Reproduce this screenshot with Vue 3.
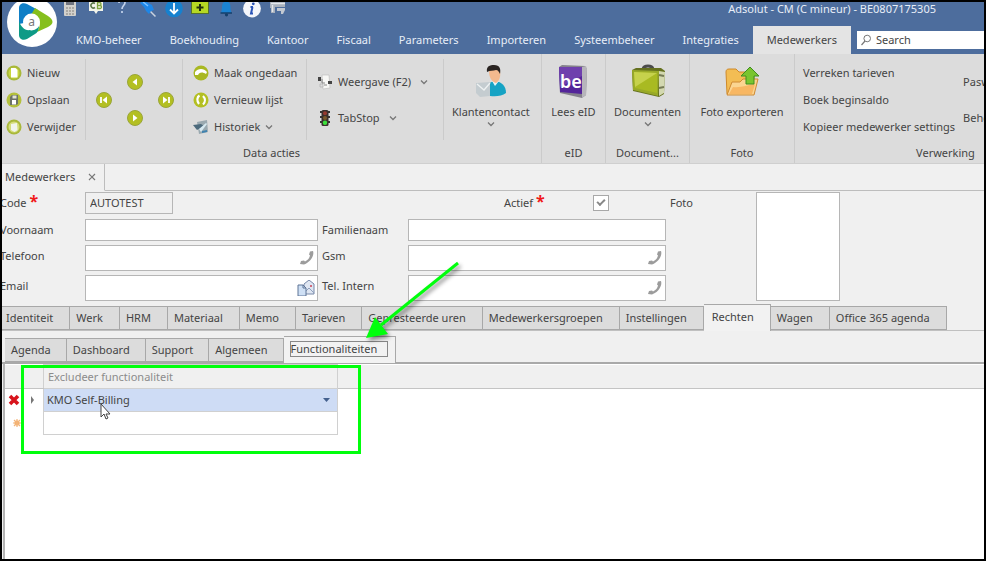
<script setup>
import { ref } from 'vue'

const menu = ['KMO-beheer', 'Boekhouding', 'Kantoor', 'Fiscaal', 'Parameters', 'Importeren', 'Systeembeheer', 'Integraties', 'Medewerkers']
const activeMenu = ref('Medewerkers')

const tabs = ['Identiteit', 'Werk', 'HRM', 'Materiaal', 'Memo', 'Tarieven', 'Gepresteerde uren', 'Medewerkersgroepen', 'Instellingen', 'Rechten', 'Wagen', 'Office 365 agenda']
const activeTab = ref('Rechten')

const subTabs = ['Agenda', 'Dashboard', 'Support', 'Algemeen', 'Functionaliteiten']
const activeSubTab = ref('Functionaliteiten')

const code = ref('AUTOTEST')
const active = ref(true)
const functionality = ref('KMO Self-Billing')
</script>

<template>
  <div class="window">
    <header class="header">
      <div class="topbar">
        <div class="quick">
          <button aria-label="Rekenmachine">
            <svg viewBox="0 0 18 16"><rect x="3" y="-3" width="12" height="17" rx="1" fill="#d3d1cc" /><rect x="5" y="-1" width="8" height="4" fill="#6f7480" /><path d="M5 6h2M8 6h2M11 6h2M5 9h2M8 9h2M11 9h2M5 12h2M8 12h2M11 12h2" stroke="#a09c96" stroke-width="1.6" /></svg>
          </button>
          <button aria-label="CodaBox">
            <svg viewBox="0 0 18 16"><path d="M2-3h14v12h-5l-2 3-2-3H2z" fill="#f2f4ea" /><path d="M8 1.500a2.500 2.500 0 1 0 0 4" fill="none" stroke="#5d7a4c" stroke-width="1.600" /><path d="M10.500 .5h2a1.500 1.500 0 0 1 0 3h-2zm0 3h2.500a1.500 1.500 0 0 1 0 3h-2.500z" fill="none" stroke="#7da33f" stroke-width="1.300" /></svg>
          </button>
          <button aria-label="Help">
            <svg viewBox="0 0 18 16"><path d="M6 1C6-3 12-3 12 .5 12 3.500 9 3.500 9 7M9 9v2" fill="none" stroke="#c3d3ec" stroke-width="1.700" /></svg>
          </button>
          <button aria-label="Vastmaken">
            <svg viewBox="0 0 18 16"><path d="M11 9l5.500 5.500" stroke="#c9d3e0" stroke-width="1.500" /><path d="M1 1l4-3 4 3 4 2 2 5-3 1-2 3-3-3-2-4z" fill="#1e86e6" /><path d="M4 0l5 4" stroke="#7dc0ff" stroke-width="1.500" /></svg>
          </button>
          <button aria-label="Downloaden">
            <svg viewBox="0 0 18 16"><circle cx="9" cy="6.500" r="8.800" fill="#1681cf" /><path d="M9 1v10M5 7.500l4 4 4-4" fill="none" stroke="#fff" stroke-width="1.800" /></svg>
          </button>
          <button aria-label="Toevoegen">
            <svg viewBox="0 0 18 16"><rect x="0" y="-2" width="18" height="14" fill="#55702a" /><rect x="1" y="-1" width="16" height="12" fill="#b5d823" /><path d="M9 2v7M5.500 5.500h7" stroke="#20300c" stroke-width="2" /></svg>
          </button>
          <button aria-label="Meldingen">
            <svg viewBox="0 0 18 16"><path d="M3.500 11c2-2 1-6 2-9C6.500-1 12-1 13 2c1 3 0 7 2 9z" fill="#1b83d2" /><path d="M3.500 11h11.500" stroke="#123c66" stroke-width="1.400" /><circle cx="9.500" cy="12.800" r="1.600" fill="#143f6b" /></svg>
          </button>
          <button aria-label="Informatie">
            <svg viewBox="0 0 18 16"><circle cx="9" cy="6.500" r="8.900" fill="#f4f6fb" /><path d="M9.500 5l-1.500 6.500h2M7.500 5h2.500" fill="none" stroke="#2b55b8" stroke-width="2" /><circle cx="10.300" cy="1.800" r="1.400" fill="#2b55b8" /></svg>
          </button>
          <button aria-label="Lay-out">
            <svg viewBox="0 0 18 16"><path d="M1-1h15v6H6v6H2V6H1z" fill="#a9b1bd" /><path d="M2 1.500h14M3.500 3v7" stroke="#e3e7ec" stroke-width="1.500" /><path d="M8 6h8v2l-2 4h-2V9H8z" fill="#c2c8d1" /></svg>
          </button>
        </div>
        <h1 class="title">Adsolut - CM (C mineur) - BE0807175305</h1>
      </div>
      <nav class="menu">
        <button v-for="m in menu" :key="m" :class="{ on: m === activeMenu }" @click="activeMenu = m">{{ m }}</button>
        <label class="search">
          <svg viewBox="0 0 12 12"><circle cx="7.200" cy="4.500" r="3.300" fill="none" stroke="#777" /><path d="M5 7l-3.500 4" stroke="#777" stroke-width="1.200" /></svg>
          <input type="search" placeholder="Search" aria-label="Search" />
        </label>
      </nav>
      <button class="logo" aria-label="Adsolut">
        <svg viewBox="0 0 50 50">
          <circle cx="25" cy="25" r="25" fill="#fff" />
          <path d="M12 27V11c0-4 4-6 8-4l11 6-6 6c-5 0-8 4-8 7z" fill="#0f7fc6" />
          <path d="M28 11l13 8c6 4 6 8 0 11l-11 5c3-5 4-9 1-13-1-3-4-4-7-4z" fill="#86bf1d" />
          <path d="M12 24c2 6 6 10 11 9 4 0 7-2 9-4 0 4-2 7-4 8l-8 5c-4 2-8 0-8-4z" fill="#0d9a86" />
          <circle cx="24.500" cy="25" r="8.500" fill="#fff" />
          <text x="24.500" y="29" text-anchor="middle" font-size="12" fill="#777">a</text>
        </svg>
      </button>
    </header>

    <section class="ribbon" aria-label="Lint">
      <div class="group data">
        <div class="body">
          <div class="col file">
            <button>
              <svg viewBox="0 0 16 16"><circle cx="8" cy="8" r="7.500" fill="#a9b83a" /><circle cx="8" cy="8" r="5.500" fill="#c9d63e" /><path d="M5 3h4.500l2 2v7.500H5z" fill="#fff" /></svg>
              Nieuw
            </button>
            <button>
              <svg viewBox="0 0 16 16"><circle cx="8" cy="8" r="7.500" fill="#b4c03c" /><path d="M4 5l2-2h6v9l-2 1H4z" fill="#6c7268" /><path d="M6.500 3.500h4v3h-4z" fill="#e3e5d6" /><path d="M6 8h4v4.500H6z" fill="#fff" /></svg>
              Opslaan
            </button>
            <button>
              <svg viewBox="0 0 16 16"><circle cx="8" cy="8" r="7.500" fill="#a9b83a" /><circle cx="8" cy="8" r="5.500" fill="#d5dd7c" /><path d="M5 5l6-1 .5 7-3 2-3.500-2z" fill="#f1f5ec" /></svg>
              Verwijder
            </button>
          </div>
          <div class="col nav">
            <button aria-label="Eerste"><svg viewBox="0 0 16 16"><circle cx="8" cy="8" r="7.500" fill="#b3bf22" stroke="#9aa53a" /><path d="M5 5v6" stroke="#fff" stroke-width="1.800" /><path d="M11 4.500v7L6.500 8z" fill="#fff" /></svg></button>
            <div class="mid">
              <button aria-label="Vorige"><svg viewBox="0 0 16 16"><circle cx="8" cy="8" r="7.500" fill="#b3bf22" stroke="#9aa53a" /><path d="M10 4.500v7L5.500 8z" fill="#fff" /></svg></button>
              <button aria-label="Volgende"><svg viewBox="0 0 16 16"><circle cx="8" cy="8" r="7.500" fill="#b3bf22" stroke="#9aa53a" /><path d="M6 4.500v7L10.500 8z" fill="#fff" /></svg></button>
            </div>
            <button aria-label="Laatste"><svg viewBox="0 0 16 16"><circle cx="8" cy="8" r="7.500" fill="#b3bf22" stroke="#9aa53a" /><path d="M11 5v6" stroke="#fff" stroke-width="1.800" /><path d="M5 4.500v7L9.500 8z" fill="#fff" /></svg></button>
          </div>
          <div class="col history">
            <button>
              <svg viewBox="0 0 16 16"><circle cx="8" cy="8" r="7.500" fill="#a9b822" /><path d="M2 7c3-4 9-4 12 0l-1 2c-3-2-5-2-7-.500L5 10H2z" fill="#fff" /></svg>
              Maak ongedaan
            </button>
            <button>
              <svg viewBox="0 0 16 16"><circle cx="8" cy="8" r="7.500" fill="#b3bf22" /><path d="M6.500 3.500C4 5 3.500 9 6 12M10 12.500c2.500-2.500 2.500-6 0-8.500" fill="none" stroke="#fff" stroke-width="2.200" /></svg>
              Vernieuw lijst
            </button>
            <button>
              <svg viewBox="0 0 16 16"><path d="M4 3l10-2 1 12-9 2z" fill="#9aa9b0" /><path d="M0 6l8-1 3 2-7 4z" fill="#4c6a7c" /><path d="M6 10l7-6 1 1-6 8z" fill="#d7eaf2" /><path d="M9 12l5-1v2l-5 1z" fill="#3f82b0" /></svg>
              Historiek
              <svg class="chev" viewBox="0 0 8 6"><path d="M1 1.500l3 3 3-3" /></svg>
            </button>
          </div>
          <div class="col view">
            <button>
              <svg viewBox="0 0 16 16"><path d="M5 1h7l1 13-7 1z" fill="#f7f7f5" stroke="#bbb" stroke-width=".600" /><path d="M1 3h3v4H1zM11 7h4v3h-4z" fill="#444" /><path d="M5 5v4h3M7 11h3" stroke="#888" fill="none" /><path d="M3 10h3v3H3z" fill="#ddd" stroke="#aaa" stroke-width=".600" /></svg>
              Weergave (F2)
              <svg class="chev" viewBox="0 0 8 6"><path d="M1 1.500l3 3 3-3" /></svg>
            </button>
            <button>
              <svg viewBox="0 0 16 16"><path d="M3 2h10M3 7h10M3 12h10" stroke="#333" stroke-width="2" /><rect x="4.500" y="0" width="7" height="16" rx="1.500" fill="#3b302d" /><circle cx="8" cy="3.200" r="2" fill="#96392f" /><circle cx="8" cy="8" r="2" fill="#7a5a2a" /><circle cx="8" cy="12.800" r="2.200" fill="#3be03b" /></svg>
              TabStop
              <svg class="chev" viewBox="0 0 8 6"><path d="M1 1.500l3 3 3-3" /></svg>
            </button>
          </div>
          <div class="col">
            <button class="big">
              <svg viewBox="0 0 34 34"><path d="M12 31c-1-9 3-13 9-14 7 1 11 5 11 12-5 4-14 4-20 2z" fill="#16a3c4" /><path d="M18 17l3 5 4-5z" fill="#e6f4f7" /><path d="M15 7c0-4 10-5 11 0 1 6-1 10-4 12-4-1-7-5-7-12z" fill="#f3b98e" /><path d="M13 8c-1-6 3-7 7-7 6 0 7 4 6 9-1-2-2-4-4-4-3 1-6 0-9 2z" fill="#2a2422" /><path d="M2 19l14-1v14L6 33l-4-4z" fill="#c4ccd0" /><path d="M3 20l7 6 6-7" fill="none" stroke="#eef1f2" stroke-width="1.300" /></svg>
              Klantencontact
              <svg class="chev" viewBox="0 0 8 6"><path d="M1 1.500l3 3 3-3" /></svg>
            </button>
          </div>
        </div>
        <h2>Data acties</h2>
      </div>
      <div class="group eid">
        <div class="body">
          <button class="big">
            <svg viewBox="0 0 34 34"><path d="M3 3l3-2 23 1 2 3-1 26-4 3L4 29z" fill="#85828c" /><path d="M26 3l4-1 1 3-1 26-4 3z" fill="#b7b5bb" /><path d="M3 3h23v27L4 28z" fill="#54259a" /><path d="M3 3h23v9L4 23z" fill="#6f40ad" /><text x="15" y="24" text-anchor="middle" font-size="18" font-weight="600" fill="#fff">be</text></svg>
            Lees eID
          </button>
        </div>
        <h2>eID</h2>
      </div>
      <div class="group docs">
        <div class="body">
          <button class="big">
            <svg viewBox="0 0 34 34"><path d="M12 5c1-4 9-4 10 0" fill="none" stroke="#4c4c4c" stroke-width="3" /><path d="M1 6l4-2h25l4 3-1 23-5 3L2 27z" fill="#65711f" /><path d="M1 6l27 1-1 25L2 26z" fill="#98a928" /><path d="M3 8l23 1v20L4 24z" fill="#a9ba22" /><path d="M3 8l23 1L4 23z" fill="#c6d24c" /><path d="M28 7l6 1-1 21-5 3z" fill="#d3d8b0" /><path d="M28 11l5 1M28 24l5-1" stroke="#757a55" stroke-width="2" /></svg>
            Documenten
            <svg class="chev" viewBox="0 0 8 6"><path d="M1 1.500l3 3 3-3" /></svg>
          </button>
        </div>
        <h2>Document...</h2>
      </div>
      <div class="group foto">
        <div class="body">
          <button class="big">
            <svg viewBox="0 0 34 34"><path d="M1 8c0-2 1-3 3-3h7l3 3h12c2 0 3 1 3 3v19H2z" fill="#f3bd54" stroke="#cf8a2a" /><path d="M2 31l5-13h8l3-3h15l-4 16z" fill="#fbd591" stroke="#d08a32" /><path d="M4 30l4-7c8 1 14-2 22-3l-3 10z" fill="#f8b763" /><path d="M25 3l9 9h-5v8h-8v-8h-5z" fill="#79c52f" stroke="#3f8e20" /></svg>
            Foto exporteren
          </button>
        </div>
        <h2>Foto</h2>
      </div>
      <div class="group process">
        <div class="body">
          <div class="col plain">
            <button>Verreken tarieven</button>
            <button>Boek beginsaldo</button>
            <button>Kopieer medewerker settings</button>
          </div>
          <div class="col plain pair">
            <button>Paswoord</button>
            <button>Beheer</button>
          </div>
        </div>
        <h2>Verwerking</h2>
      </div>
    </section>

    <div class="doctabs">
      <div class="doctab">
        Medewerkers
        <button aria-label="Sluiten"><svg viewBox="0 0 8 8"><path d="M1 1l6 6M7 1L1 7" stroke="#777" stroke-width="1.200" /></svg></button>
      </div>
    </div>

    <form class="form" @submit.prevent>
      <label class="first" for="code">Code <span class="req">*</span></label>
      <div class="field code"><input id="code" v-model="code" /></div>
      <div class="active">
        <label for="actief">Actief <span class="req">*</span></label>
        <input id="actief" v-model="active" type="checkbox" />
      </div>
      <span class="fotolabel">Foto</span>
      <div class="photo"></div>

      <label class="first" for="voornaam">Voornaam</label>
      <div class="field"><input id="voornaam" /></div>
      <label class="second" for="familienaam">Familienaam</label>
      <div class="field"><input id="familienaam" /></div>

      <label class="first" for="telefoon">Telefoon</label>
      <div class="field tall">
        <input id="telefoon" />
        <button aria-label="Bel telefoon"><svg viewBox="0 0 16 16"><path d="M11 1.500l3-.5c1.500 4-2 11-9 13.500l-4-.5 1-3 3-.5 1 1c3-1.500 4.500-3.500 5-6l-1-1z" fill="#9c9c9c" /></svg></button>
      </div>
      <label class="second" for="gsm">Gsm</label>
      <div class="field tall">
        <input id="gsm" />
        <button aria-label="Bel gsm"><svg viewBox="0 0 16 16"><path d="M11 1.500l3-.5c1.500 4-2 11-9 13.500l-4-.5 1-3 3-.5 1 1c3-1.500 4.500-3.500 5-6l-1-1z" fill="#9c9c9c" /></svg></button>
      </div>

      <label class="first" for="email">Email</label>
      <div class="field tall">
        <input id="email" />
        <button class="mail" aria-label="Mail"><svg viewBox="0 0 18 16"><path d="M7 4l5-4 5 4v10H7z" fill="#dfe6f2" stroke="#7688a8" /><path d="M7 13l5-5 5 5" fill="none" stroke="#8fa0bd" /><path d="M13 5h2v2h-2z" fill="#d06a7a" /><path d="M1 5h5l3 3v8H1z" fill="#cfe0f5" stroke="#5e7496" /><path d="M6 5v3h3" fill="none" stroke="#5e7496" /></svg></button>
      </div>
      <label class="second" for="intern">Tel. Intern</label>
      <div class="field tall">
        <input id="intern" />
        <button aria-label="Bel intern"><svg viewBox="0 0 16 16"><path d="M11 1.500l3-.5c1.500 4-2 11-9 13.500l-4-.5 1-3 3-.5 1 1c3-1.500 4.500-3.500 5-6l-1-1z" fill="#9c9c9c" /></svg></button>
      </div>
    </form>

    <div class="tabs" role="tablist">
      <button v-for="t in tabs" :key="t" role="tab" :class="{ on: t === activeTab }" @click="activeTab = t"><span>{{ t }}</span></button>
    </div>

    <div class="tabs sub" role="tablist">
      <button v-for="t in subTabs" :key="t" role="tab" :class="{ on: t === activeSubTab }" @click="activeSubTab = t"><span>{{ t }}</span></button>
    </div>

    <main class="grid">
      <table>
        <thead>
          <tr>
            <th class="mark"></th>
            <th class="name">Excludeer functionaliteit</th>
            <th></th>
          </tr>
        </thead>
        <tbody>
          <tr>
            <td class="mark">
              <div class="marks">
                <button aria-label="Rij verwijderen"><svg viewBox="0 0 12 12"><path d="M2 2l8 8M10 2l-8 8" stroke="#d8141c" stroke-width="3.600" /></svg></button>
                <svg class="pointer" viewBox="0 0 6 8"><path d="M1 0l3 4-3 4z" fill="#777" /></svg>
              </div>
            </td>
            <td class="name selected">
              <div class="pick">
                <select v-model="functionality" aria-label="Excludeer functionaliteit"><option>KMO Self-Billing</option></select>
                <svg viewBox="0 0 8 4"><path d="M0 0h7L3.500 4z" fill="#44618e" /></svg>
              </div>
            </td>
            <td></td>
          </tr>
          <tr>
            <td class="mark">
              <div class="marks new">
                <svg viewBox="0 0 12 12"><circle cx="6" cy="6" r="2.500" fill="#f0a050" /><path d="M6 2v8M2 6h8M3 3l6 6M9 3l-6 6" stroke="#f3b478" stroke-width="1.200" /></svg>
              </div>
            </td>
            <td class="name"><input aria-label="Nieuwe functionaliteit" /></td>
            <td></td>
          </tr>
        </tbody>
      </table>
    </main>

    <div class="highlight"></div>
    <svg class="arrow" viewBox="0 0 104 86">
      <path d="M97 4L20 66" stroke="#00ff0c" stroke-width="3" />
      <path d="M5 79L14 58l13 17z" fill="#00ff0c" />
    </svg>
    <svg class="cursor" viewBox="0 0 12 18"><path d="M1 1v13l3-3 2 5 2-1-2-4h4z" fill="#fff" stroke="#444" /></svg>
  </div>
</template>

<style>
body {
  margin: 0;
}
</style>

<style scoped>
.window {
  position: relative;
  box-sizing: border-box;
  min-height: 100vh;
  border: 2px solid #000;
  overflow: hidden;
  display: flex;
  flex-direction: column;
  background: #f0f0f0;
  color: #444;
  font: 11px/18px "Noto Sans", "Open Sans", sans-serif;
}
button,
input,
select {
  font: inherit;
  color: inherit;
  margin: 0;
  padding: 0;
  border: 0;
  background: none;
  outline: none;
}
button {
  white-space: nowrap;
}
svg {
  display: block;
  flex: none;
}
h1,
h2 {
  margin: 0;
  font: inherit;
}

/* Title bar and menu */
.header {
  position: relative;
  overflow: hidden;
  background: #4d6d9d;
  color: #e8eef8;
}
.topbar {
  display: flex;
  justify-content: space-between;
  height: 24px;
  padding: 0 48px 0 59px;
}
.quick {
  display: flex;
  align-items: flex-start;
  gap: 8px;
}
.quick svg {
  width: 18px;
  height: 16px;
}
.title {
  line-height: 13px;
  white-space: nowrap;
}
.menu {
  display: flex;
  height: 28px;
  padding-left: 60px;
}
.menu > button {
  padding: 0 14px;
}
.menu > button.on {
  background: #e4e4e4;
  color: #444;
}
.search {
  flex: 1;
  display: flex;
  align-items: center;
  gap: 4px;
  min-width: 0;
  margin: 5px 0 5px 6px;
  padding-left: 3px;
  background: #fff;
  color: #444;
}
.search svg {
  width: 12px;
  height: 12px;
}
.search input {
  flex: 1;
  min-width: 0;
}
.search input::placeholder {
  color: #444;
}
.logo {
  position: absolute;
  left: 5px;
  top: -5px;
}
.logo svg {
  width: 50px;
  height: 50px;
}

/* Ribbon */
.ribbon {
  display: flex;
  overflow: hidden;
  background: #dcdcdc;
  border-bottom: 1px solid #cfcfcf;
}
.group {
  flex: none;
  box-sizing: border-box;
  border-right: 1px solid #cbcbcb;
}
.group h2 {
  text-align: center;
  line-height: 20px;
}
.body {
  display: flex;
  height: 89px;
  box-sizing: border-box;
  padding: 5px 0 3px;
}
.data {
  width: 540px;
}
.eid {
  width: 64px;
}
.docs {
  width: 84px;
}
.foto {
  width: 105px;
}
.process {
  width: 302px;
}
.col {
  display: flex;
  flex-direction: column;
  box-sizing: border-box;
  border-right: 1px solid #cbcbcb;
}
.col:last-child,
.col.plain {
  border-right: 0;
}
.col button {
  display: flex;
  align-items: center;
  gap: 5px;
  height: 27px;
}
.col svg {
  width: 16px;
  height: 16px;
}
.col .chev,
.chev {
  width: 8px;
  height: 6px;
  fill: none;
  stroke: #777;
  stroke-width: 1.3;
}
.file {
  width: 84px;
  padding-left: 4px;
}
.nav {
  width: 97px;
  padding-left: 2px;
  flex-direction: row;
  align-items: center;
}
.nav button {
  width: 31px;
  height: 18px;
  justify-content: center;
}
.mid {
  display: flex;
  flex-direction: column;
  gap: 18px;
}
.history {
  width: 124px;
  padding-left: 10px;
}
.view {
  width: 137px;
  padding-left: 10px;
  justify-content: center;
}
.view button,
.pair button {
  height: 36px;
}
.view .chev {
  margin-left: 4px;
}
.pair {
  justify-content: center;
}
.plain {
  padding-left: 8px;
}
.body .big {
  display: flex;
  flex-direction: column;
  align-items: center;
  justify-content: flex-start;
  gap: 0;
  height: auto;
  padding: 5px 8px 0;
}
.eid .body,
.docs .body,
.foto .body {
  justify-content: center;
}
.eid .big,
.docs .big,
.foto .big {
  padding: 5px 0 0;
}
.big > svg:first-child {
  width: 34px;
  height: 34px;
  margin-bottom: 5px;
}

/* Document tab */
.doctabs {
  display: flex;
  height: 26px;
  border-bottom: 1px solid #bdbdbd;
}
.doctab {
  display: flex;
  align-items: center;
  gap: 13px;
  height: 26px;
  padding: 0 8px 0 3px;
  border-right: 1px solid #bdbdbd;
  border-bottom: 1px solid #f0f0f0;
}
.doctab svg {
  width: 8px;
  height: 8px;
}

/* Employee form */
.form {
  display: grid;
  grid-template-columns: 85px 233px 90px 258px 90px 84px;
  grid-template-rows: 27px 26px 30px 26px;
  align-items: start;
  margin-left: -2px;
  padding: 1px 0 5px;
  line-height: 22px;
}
.first {
  grid-column: 1;
}
.second {
  grid-column: 3;
  padding-left: 4px;
}
.field {
  box-sizing: border-box;
  display: flex;
  align-items: center;
  height: 22px;
  border: 1px solid #b6b6b6;
  background: #fff;
}
.field input {
  flex: 1;
  min-width: 0;
  padding-left: 4px;
}
.field svg {
  width: 16px;
  height: 16px;
}
.field button {
  padding-right: 2px;
}
.field .mail svg {
  width: 18px;
}
.tall {
  height: 26px;
}
.code {
  width: 88px;
  background: #f0f0f0;
}
.active {
  grid-column: 4;
  display: flex;
  align-items: center;
  justify-content: space-between;
  padding: 0 57px 0 96px;
}
.active input {
  appearance: none;
  box-sizing: border-box;
  display: grid;
  place-items: center;
  width: 16px;
  height: 16px;
  border: 1px solid #a8a8a8;
  background: #fff;
}
.active input:checked::after {
  content: "";
  width: 6px;
  height: 3px;
  margin-bottom: 3px;
  border: solid #888;
  border-width: 0 0 2px 2px;
  transform: rotate(-45deg);
}
.req {
  color: #f01818;
  font-size: 16px;
  font-weight: 700;
  line-height: 1;
}
.fotolabel {
  grid-column: 5;
  padding-left: 4px;
}
.photo {
  grid-row: 1 / 5;
  grid-column: 6;
  align-self: stretch;
  border: 1px solid #b6b6b6;
  background: #fff;
}

/* Tab strips */
.tabs {
  display: flex;
  align-items: flex-end;
  height: 24px;
  border-bottom: 1px solid #c0c0c0;
}
.tabs button {
  box-sizing: border-box;
  height: 24px;
  padding: 0 16px 0 6px;
  border: 1px solid #a8a8a8;
  border-left-width: 0;
  background: #dcdcdc;
  text-align: left;
}
.tabs button:first-child {
  padding-left: 4px;
}
.tabs button.on {
  height: 27px;
  margin-bottom: -1px;
  padding: 0 16px 2px 8px;
  border-bottom: 0;
  background: #f2f2f2;
}
.sub {
  margin-top: 7px;
  padding-left: 3px;
  border-bottom: 2px solid #a9a9a9;
}
.sub button:first-child {
  padding-left: 6px;
}
.tabs.sub button {
  padding-right: 15px;
}
.tabs.sub button.on {
  padding: 0 7px 2px 6px;
}
.sub button.on span {
  display: block;
  padding: 0 10px 0 0;
  border: 1px solid #888;
  line-height: 14px;
}

/* Functionality table */
.grid {
  flex: 1;
  margin-left: 1px;
  border-left: 2px solid #b4b4b4;
  background: #fff;
}
table {
  width: 100%;
  border-collapse: collapse;
  table-layout: fixed;
}
th,
td {
  height: 22px;
  padding: 0;
  font-weight: 400;
  text-align: left;
}
th {
  height: 23px;
  background: #f0f0f0;
  border-bottom: 1px solid #c4c4c4;
  color: #8c8c8c;
}
.mark {
  width: 38px;
}
th.name {
  width: 289px;
  padding-left: 4px;
}
.name {
  border: 1px solid #d0d0d0;
}
.selected {
  background: #cedcf5;
}
.marks {
  display: flex;
  align-items: center;
  gap: 10px;
  padding-left: 3px;
}
.marks.new {
  padding-left: 6px;
}
.marks svg {
  width: 12px;
  height: 12px;
}
.marks .pointer {
  width: 6px;
  height: 8px;
}
.pick {
  display: flex;
  align-items: center;
  padding: 0 6px 0 3px;
}
.pick select {
  flex: 1;
  appearance: none;
}
.pick svg {
  width: 8px;
  height: 4px;
}
td > input {
  display: block;
  width: 100%;
}

/* Annotations over the page */
.highlight {
  position: absolute;
  left: 19px;
  top: 363px;
  box-sizing: border-box;
  width: 340px;
  height: 89px;
  border: 3px solid #00ff0c;
}
.arrow {
  position: absolute;
  left: 359px;
  top: 257px;
  width: 104px;
  height: 86px;
  filter: drop-shadow(2px 3px 2px rgba(0, 0, 0, 0.45));
}
.cursor {
  position: absolute;
  left: 98px;
  top: 401px;
  width: 12px;
  height: 18px;
}
</style>
